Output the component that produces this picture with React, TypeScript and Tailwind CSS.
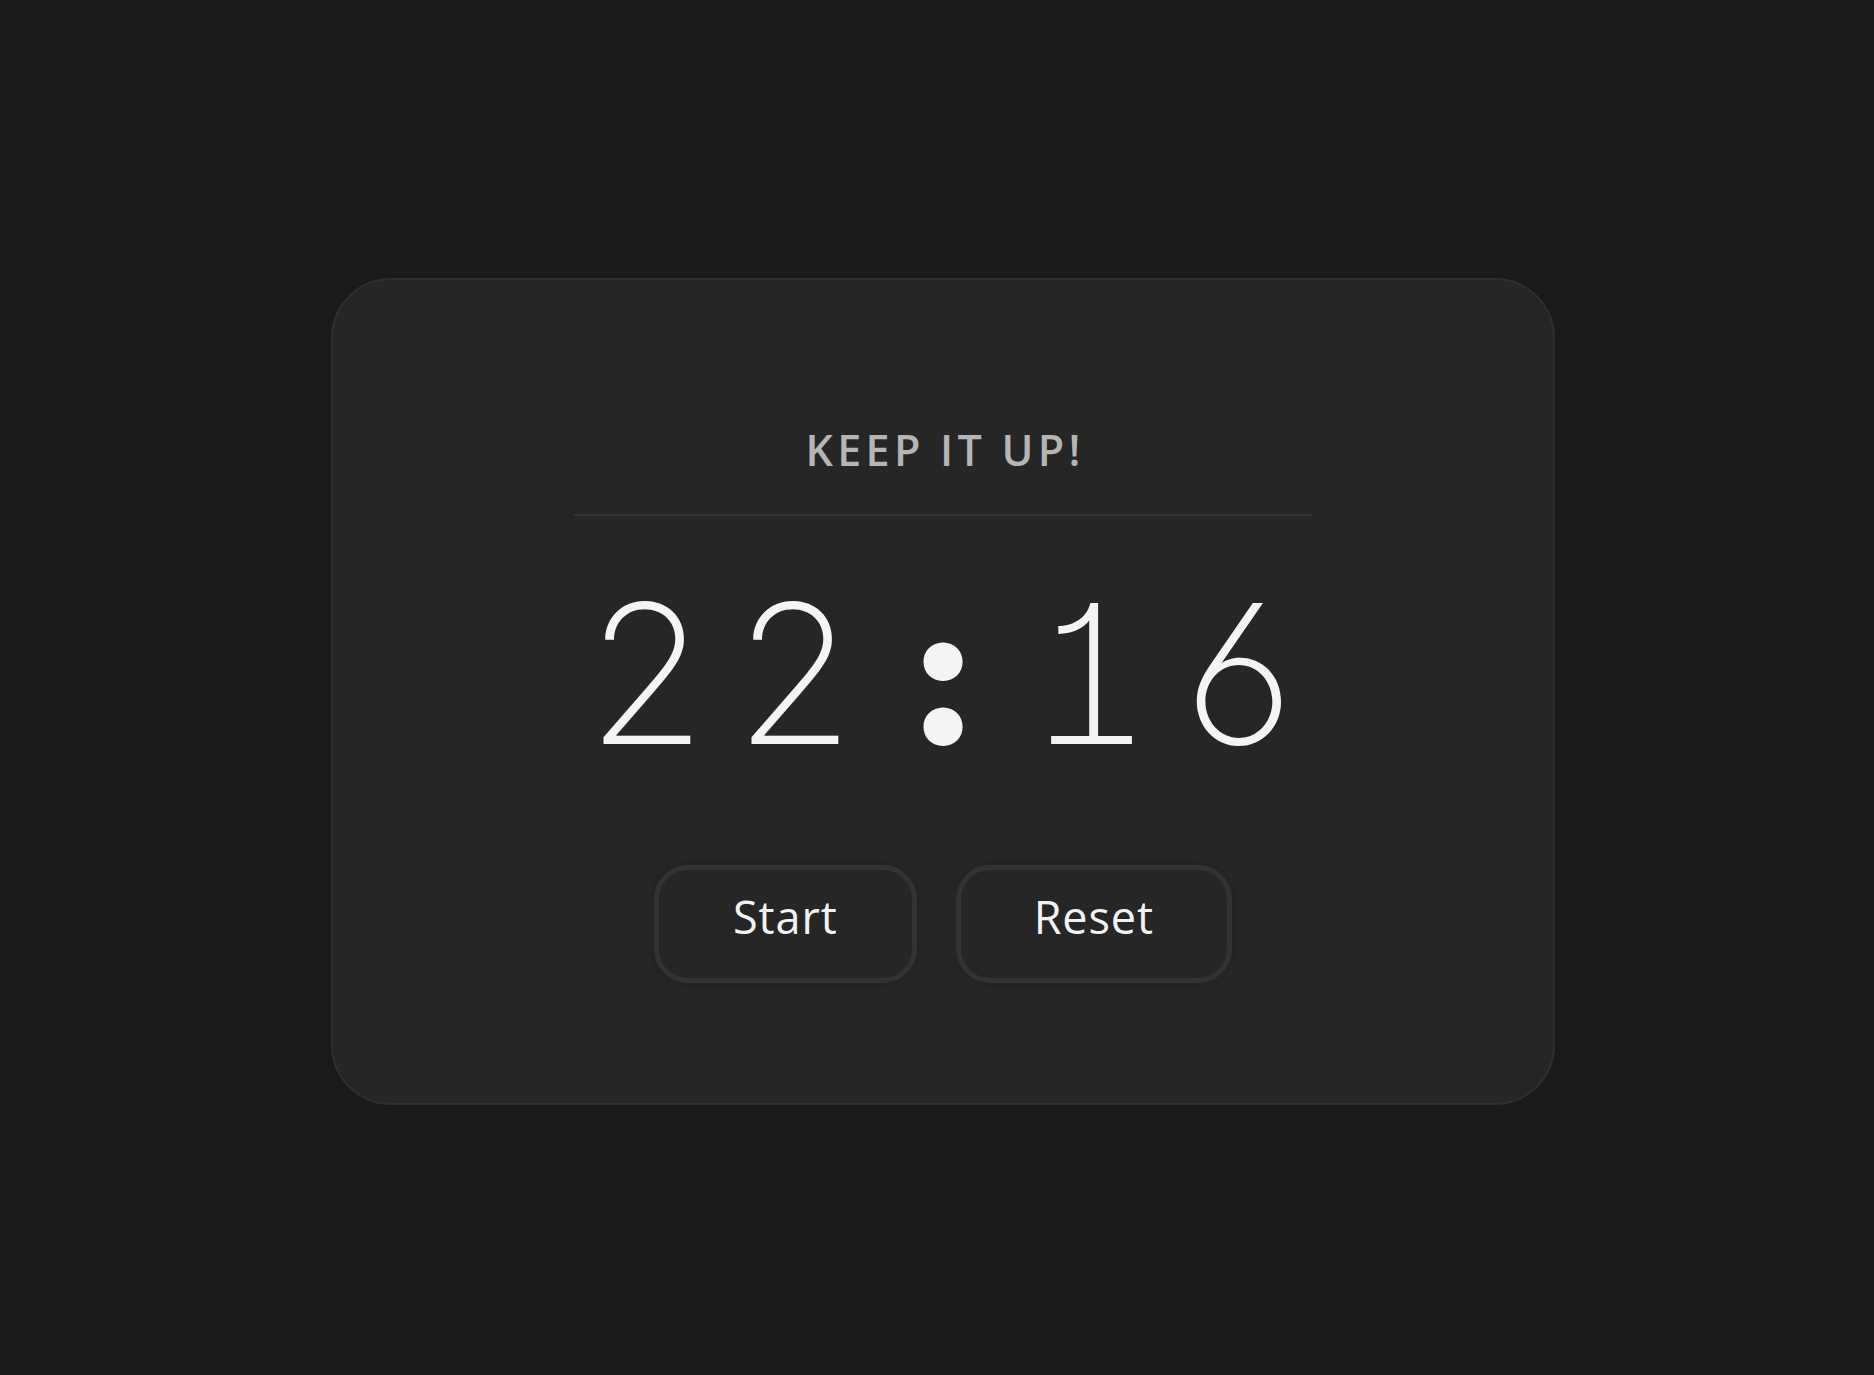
import React from "react";

export default function App() {
  const chars = ["2", "2", ":", "1", "6"];
  return (
    <div className="min-h-screen w-full bg-[#1a1a1a] flex items-center justify-center pl-[12px] pt-[8px]">
      <div className="w-[1224px] rounded-[60px] border-2 border-[#2f2f2f] bg-[#262626] pt-[148px] pb-[120px] flex flex-col items-center">
        <h1 className="text-[43px] leading-[43px] font-semibold tracking-[0.1em] text-[#b5b5b5] font-['Open_Sans',sans-serif] pl-[0.1em]">
          KEEP IT UP!
        </h1>
        <div className="mt-[43px] h-[2px] w-[739px] bg-[#333333]" />
        <div className="mt-[61px] flex text-[#f4f4f4] font-['Inter',sans-serif] text-[194px] leading-[194px] [font-feature-settings:'cv01','ss01','tnum']">
          {chars.map((c, i) => (
            <span
              key={i}
              className={
                c === ":"
                  ? "w-[148px] text-center font-black"
                  : "w-[148px] text-center font-extralight"
              }
            >
              {c}
            </span>
          ))}
        </div>
        <div className="mt-[94px] flex gap-[39px] font-['Open_Sans',sans-serif]">
          <button className="h-[118px] px-[74px] pb-[16px] rounded-[34px] border-[5px] border-[#333333] bg-[#262626] text-[#f2f2f2] text-[45px] leading-[45px] tracking-[0.02em] shadow-[0_0_6px_rgba(0,0,0,0.18)]">
            Start
          </button>
          <button className="h-[118px] px-[73px] pb-[16px] rounded-[34px] border-[5px] border-[#333333] bg-[#262626] text-[#f2f2f2] text-[45px] leading-[45px] tracking-[0.02em] shadow-[0_0_6px_rgba(0,0,0,0.18)]">
            Reset
          </button>
        </div>
      </div>
    </div>
  );
}
